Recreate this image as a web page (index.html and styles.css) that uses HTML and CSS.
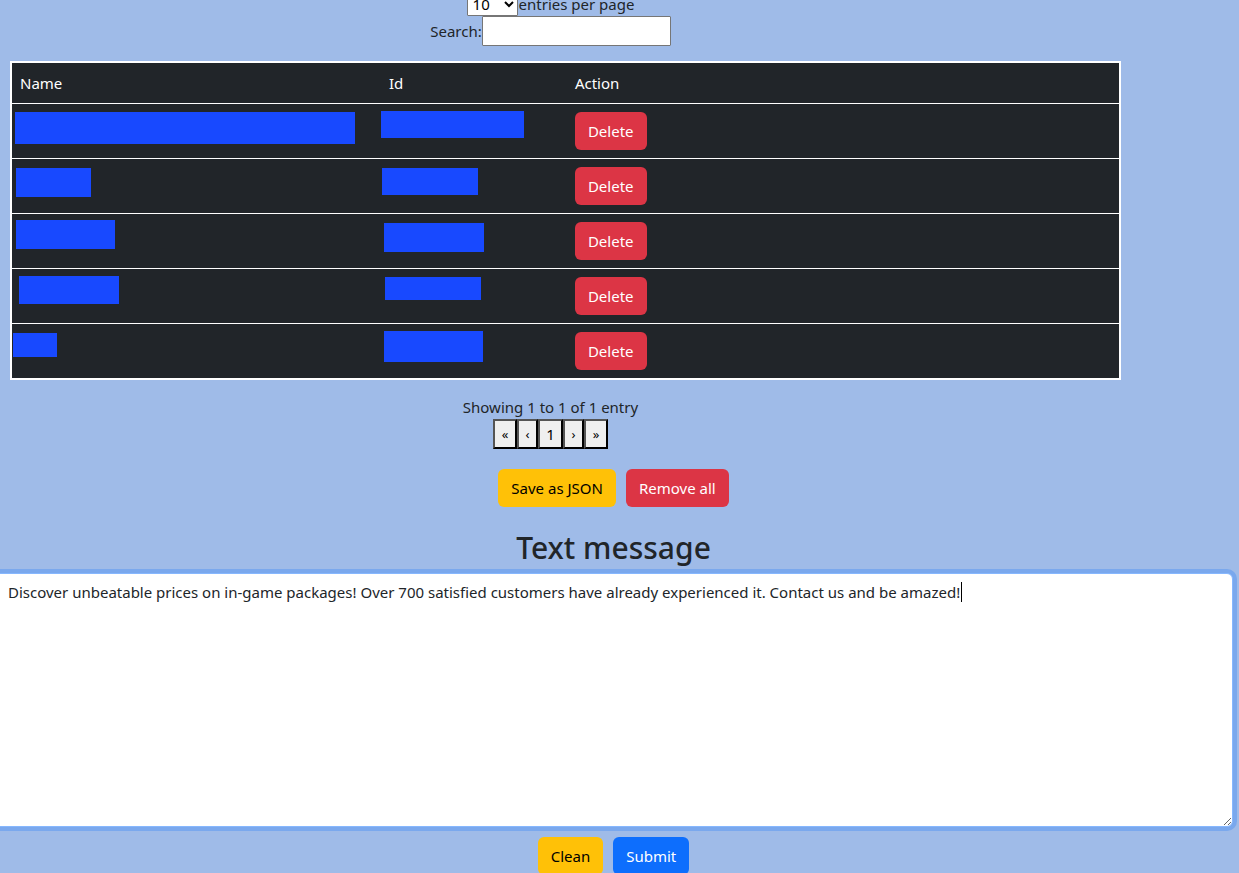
FILE: index.html
```html
<!DOCTYPE html>
<html lang="en">
<head>
<meta charset="utf-8">
<title>Text message</title>
<link rel="stylesheet" href="styles.css">
</head>
<body>
<main class="page">
  <section class="list">
    <div class="control length">
      <select class="length-select" id="length"><option>10</option><option>25</option><option>50</option></select>
      <label for="length">entries per page</label>
    </div>
    <div class="control">
      <label for="search">Search:</label>
      <input class="search-input" id="search" type="search">
    </div>
    <table class="table">
      <colgroup><col class="col-name"><col class="col-id"><col></colgroup>
      <thead>
        <tr><th scope="col">Name</th><th scope="col">Id</th><th scope="col">Action</th></tr>
      </thead>
      <tbody>
        <tr><td><span class="mask name-1"></span></td><td><span class="mask id-1"></span></td><td><button class="btn danger" type="button">Delete</button></td></tr>
        <tr><td><span class="mask name-2"></span></td><td><span class="mask id-2"></span></td><td><button class="btn danger" type="button">Delete</button></td></tr>
        <tr><td><span class="mask name-3"></span></td><td><span class="mask id-3"></span></td><td><button class="btn danger" type="button">Delete</button></td></tr>
        <tr><td><span class="mask name-4"></span></td><td><span class="mask id-4"></span></td><td><button class="btn danger" type="button">Delete</button></td></tr>
        <tr><td><span class="mask name-5"></span></td><td><span class="mask id-5"></span></td><td><button class="btn danger" type="button">Delete</button></td></tr>
      </tbody>
    </table>
    <div class="info">Showing 1 to 1 of 1 entry</div>
    <nav class="pager" aria-label="Pages">
      <button type="button" class="page-btn arrow double">«</button>
      <button type="button" class="page-btn arrow">‹</button>
      <button type="button" class="page-btn number">1</button>
      <button type="button" class="page-btn arrow">›</button>
      <button type="button" class="page-btn arrow double">»</button>
    </nav>
  </section>
  <div class="actions">
    <button class="btn warning" type="button">Save as JSON</button>
    <button class="btn danger" type="button">Remove all</button>
  </div>
  <h2 class="title"><label for="message">Text message</label></h2>
  <div class="editor">
    <textarea class="message" id="message" spellcheck="false">Discover unbeatable prices on in-game packages! Over 700 satisfied customers have already experienced it. Contact us and be amazed!</textarea>
    <span class="caret"></span>
  </div>
  <div class="actions submit-row">
    <button class="btn warning" type="button">Clean</button>
    <button class="btn primary" type="submit">Submit</button>
  </div>
</main>
</body>
</html>
```
FILE: styles.css
```css
* { box-sizing: border-box; }

html { overflow: hidden; }

body {
  margin: 0;
  background: #9fbbe8;
  color: #212529;
  font: 15px/24px "Segoe UI", "Noto Sans", sans-serif;
}

button, input, select, textarea { font: inherit; }

/* The page is scrolled slightly down and to the right */
.page { margin: -14px 6px 0 -6px; }

.list { margin: 0 142px 0 16px; }

.control {
  display: flex;
  justify-content: center;
  align-items: center;
}

.length { height: 30px; gap: 1px; padding-top: 6px; }

.length-select {
  width: 51px;
  height: 24px;
  padding: 0 0 0 1px;
  border: 1px solid #767676;
  border-radius: 1px;
  background: #fff;
  color: #000;
}

.search-input {
  width: 189px;
  height: 30px;
  border: 1px solid #767676;
  border-radius: 1px;
  background: #fff;
}

.table {
  width: calc(100% + 30px);
  margin-top: 15px;
  table-layout: fixed;
  border: 2px solid #fff;
  border-spacing: 0;
  background: #212529;
  color: #fff;
}

.col-name { width: 33.33%; }
.col-id { width: 16.8%; }

.table th, .table td {
  position: relative;
  padding: 8px;
  text-align: left;
  font-weight: 400;
}

.table th { height: 40px; }
.table td { height: 55px; border-top: 1px solid #fff; }

.btn {
  display: block;
  height: 38px;
  padding: 0 12px;
  border: 1px solid transparent;
  border-radius: 6px;
}

.danger { background: #dc3545; color: #fff; }
.warning { background: #ffc107; color: #000; }
.primary { background: #0d6efd; color: #fff; }

/* Blocks that cover private names and ids */
.mask { position: absolute; background: #1849ff; }
.name-1 { left: 3px; top: 8px; width: 340px; height: 32px; }
.name-2 { left: 4px; top: 9px; width: 75px; height: 29px; }
.name-3 { left: 4px; top: 6px; width: 99px; height: 29px; }
.name-4 { left: 7px; top: 7px; width: 100px; height: 28px; }
.name-5 { left: 1px; top: 9px; width: 44px; height: 24px; }
.id-1 { left: 0; top: 7px; width: 143px; height: 27px; }
.id-2 { left: 1px; top: 9px; width: 96px; height: 27px; }
.id-3 { left: 3px; top: 9px; width: 100px; height: 29px; }
.id-4 { left: 4px; top: 8px; width: 96px; height: 23px; }
.id-5 { left: 3px; top: 7px; width: 99px; height: 31px; }

.info { margin: 15px 0 1px; text-align: center; }

.pager { display: flex; justify-content: center; }

.page-btn {
  width: 21px;
  height: 30px;
  margin-top: -1px;
  padding: 0;
  border: 2px outset #000;
  background: #efefef;
  color: #000;
}

.arrow { font-size: 13px; }
.double { width: 24px; }
.number { width: 25px; }

.actions {
  display: flex;
  justify-content: center;
  gap: 10px;
  margin-top: 20px;
}

.title {
  margin: 22px 0 6px;
  text-align: center;
  font-size: 30px;
  line-height: 38px;
  font-weight: 500;
}

.editor { position: relative; }

.message {
  display: block;
  width: 100%;
  height: 254px;
  padding: 6px 13px;
  border: 1px solid #86b7fe;
  border-radius: 6px;
  outline: 0;
  background: #fff;
  color: #212529;
  box-shadow: 0 0 0 4px rgba(13, 110, 253, 0.25);
}

.caret {
  position: absolute;
  left: 967px;
  top: 9px;
  width: 1px;
  height: 20px;
  background: #000;
}

.submit-row { margin-top: 10px; }
```
